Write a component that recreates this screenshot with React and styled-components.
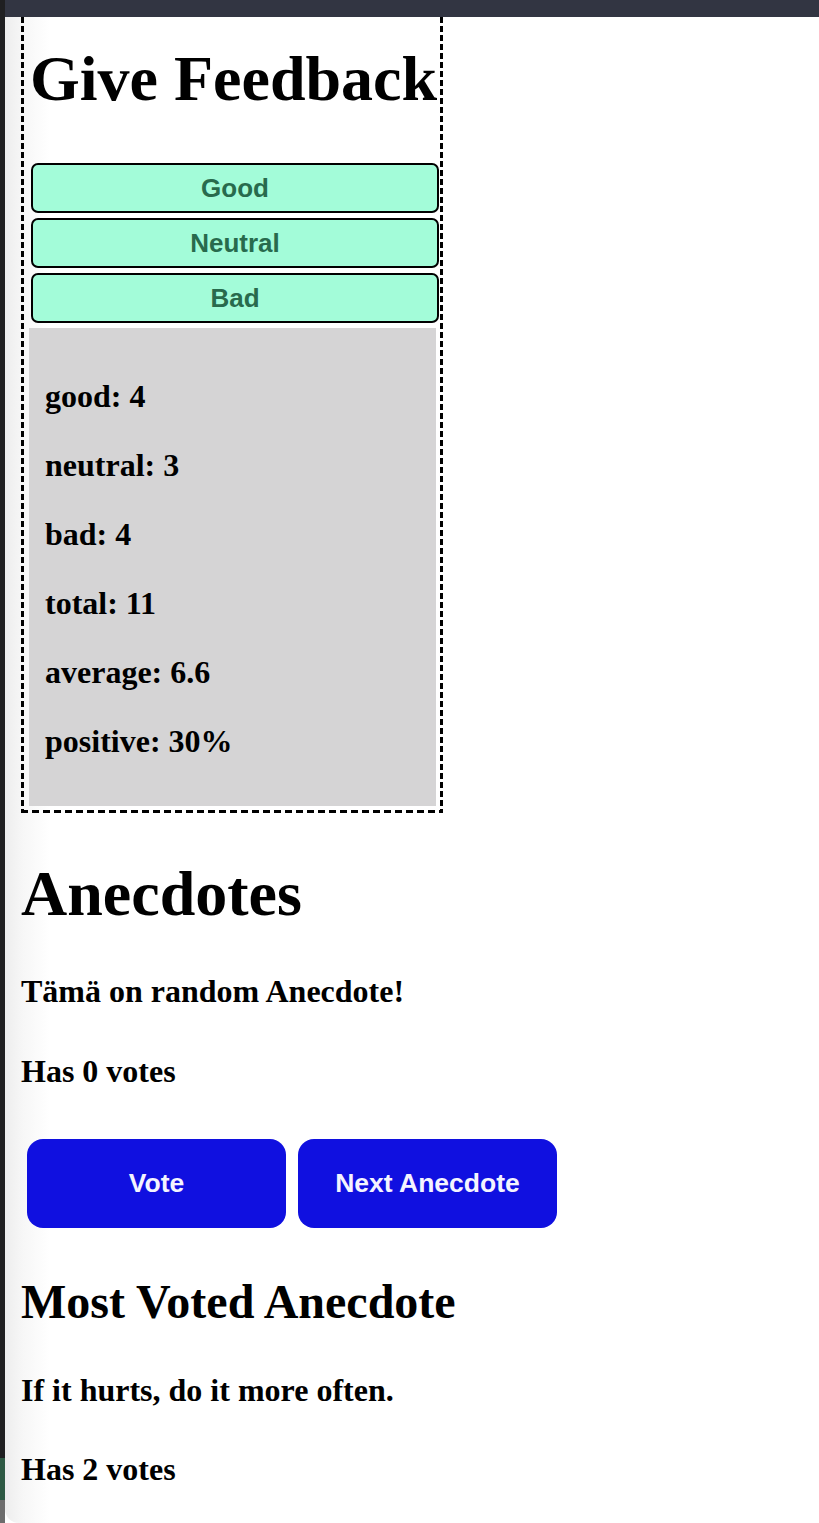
import React from "react";
import styled, { createGlobalStyle } from "styled-components";

const GlobalStyle = createGlobalStyle`
  html, body {
    margin: 0;
    padding: 0;
    background: #ffffff;
  }

  body {
    font-family: "Liberation Serif", "Times New Roman", serif;
    color: #000;
  }

  * {
    box-sizing: border-box;
  }
`;

const stats = [
  { label: "good", value: 4 },
  { label: "neutral", value: 3 },
  { label: "bad", value: 4 },
  { label: "total", value: 11 },
  { label: "average", value: 6.6 },
  { label: "positive", value: "30%" },
];

function App() {
  return (
    <>
      <GlobalStyle />
      <Frame>
        <WindowEdge />
        <Main>
          <TopBar />
          <Content>
            <FeedbackBox>
              <FeedbackTitle>Give Feedback</FeedbackTitle>
              <FeedbackButtons>
                <FeedbackButton>Good</FeedbackButton>
                <FeedbackButton>Neutral</FeedbackButton>
                <FeedbackButton>Bad</FeedbackButton>
              </FeedbackButtons>
              <StatsPanel>
                {stats.map((s) => (
                  <StatLine key={s.label}>
                    {s.label}: {s.value}
                  </StatLine>
                ))}
              </StatsPanel>
            </FeedbackBox>

            <SectionTitle>Anecdotes</SectionTitle>
            <AnecdoteLine $top={44}>Tämä on random Anecdote!</AnecdoteLine>
            <AnecdoteLine $top={43}>Has 0 votes</AnecdoteLine>

            <ButtonRow>
              <VoteButton>Vote</VoteButton>
              <VoteButton>Next Anecdote</VoteButton>
            </ButtonRow>

            <SubTitle>Most Voted Anecdote</SubTitle>
            <AnecdoteLine $top={44}>If it hurts, do it more often.</AnecdoteLine>
            <AnecdoteLine $top={42}>Has 2 votes</AnecdoteLine>
          </Content>
        </Main>
      </Frame>
    </>
  );
}

const Frame = styled.div`
  display: flex;
  height: 1523px;
  overflow: hidden;
`;

const WindowEdge = styled.div`
  flex: 0 0 5px;
  background: linear-gradient(
    to bottom,
    #1f1f21 0,
    #1f1f21 1458px,
    #2e5a44 1458px,
    #2e5a44 1500px,
    #6d6d6d 1500px
  );
`;

const Main = styled.div`
  flex: 1;
  display: flex;
  flex-direction: column;
  background: linear-gradient(to right, #ededed 0, #f7f7f7 18px, #ffffff 45px);
  border-bottom-left-radius: 14px;
`;

const TopBar = styled.div`
  flex: 0 0 17px;
  background: #323542;
`;

const Content = styled.div`
  padding: 0 16px;
`;

/* dashed frame drawn with gradients so the dash rhythm matches (6px on, 3px off) */
const FeedbackBox = styled.div`
  width: 422px;
  padding: 26px 7px 7px 8px;
  background:
    repeating-linear-gradient(to bottom, #000 0 6px, transparent 6px 9px) left top / 3px 100% no-repeat,
    repeating-linear-gradient(to bottom, #000 0 6px, transparent 6px 9px) right top / 3px 100% no-repeat,
    repeating-linear-gradient(to right, #000 0 7px, transparent 7px 11px) left bottom / 100% 3px no-repeat;
`;

const FeedbackTitle = styled.h1`
  font-size: 64px;
  font-weight: 700;
  line-height: 71px;
  margin: 0 0 0 1px;
  white-space: nowrap;
`;

const FeedbackButtons = styled.div`
  display: flex;
  flex-direction: column;
  gap: 5px;
  margin-top: 49px;
`;

const FeedbackButton = styled.button`
  height: 50px;
  width: calc(100% + 1px);
  margin-left: 2px;
  background: #a3fcd9;
  border: 2px solid #000;
  border-radius: 7px;
  color: #286a4d;
  font-family: "Liberation Sans", Arial, sans-serif;
  font-size: 26px;
  font-weight: 700;
  cursor: pointer;
`;

const StatsPanel = styled.div`
  margin-top: 5px;
  background: #d5d4d5;
  padding: 50px 16px 46px;
  display: flex;
  flex-direction: column;
  gap: 32px;
`;

const StatLine = styled.p`
  margin: 0;
  font-size: 32px;
  font-weight: 700;
  line-height: 37px;
`;

const SectionTitle = styled.h1`
  font-size: 64px;
  font-weight: 700;
  line-height: 71px;
  margin: 45px 0 0;
`;

const SubTitle = styled.h2`
  font-size: 48px;
  font-weight: 700;
  line-height: 53px;
  margin: 47px 0 0;
`;

const AnecdoteLine = styled.h4`
  font-size: 32px;
  font-weight: 700;
  line-height: 37px;
  margin: ${(p) => p.$top}px 0 0;
`;

const ButtonRow = styled.div`
  display: flex;
  gap: 12px;
  margin-top: 49px;
  padding-left: 6px;
`;

const VoteButton = styled.button`
  width: 259px;
  height: 89px;
  border: none;
  border-radius: 16px;
  background: #1010e0;
  color: #f4f4ff;
  font-family: "Liberation Sans", Arial, sans-serif;
  font-size: 26.5px;
  font-weight: 700;
  cursor: pointer;
`;

export default App;
